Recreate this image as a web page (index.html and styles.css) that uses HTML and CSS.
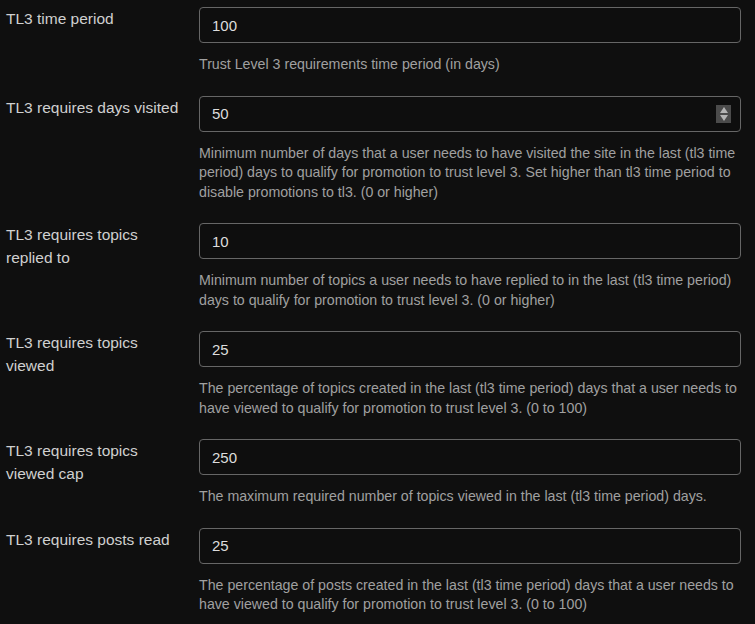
FILE: index.html
```html
<!DOCTYPE html>
<html lang="en">
<head>
    <meta charset="UTF-8">
    <title>Trust Level Settings</title>
    <link rel="stylesheet" href="styles.css">
</head>
<body>

    <div class="settings">
        <div class="setting">
            <div class="setting-label">TL3 time period</div>
            <div class="setting-value">
                <input type="text" class="setting-input" value="100">
                <div class="desc">Trust Level 3 requirements time period (in days)</div>
            </div>
        </div>

        <div class="setting">
            <div class="setting-label">TL3 requires days visited</div>
            <div class="setting-value">
                <div class="input-wrap">
                    <input type="text" class="setting-input" value="50">
                    <span class="spinner">
                        <span class="spin-up"></span>
                        <span class="spin-down"></span>
                    </span>
                </div>
                <div class="desc">Minimum number of days that a user needs to have visited the site in the last (tl3 time period) days to qualify for promotion to trust level 3. Set higher than tl3 time period to disable promotions to tl3. (0 or higher)</div>
            </div>
        </div>

        <div class="setting">
            <div class="setting-label">TL3 requires topics replied to</div>
            <div class="setting-value">
                <input type="text" class="setting-input" value="10">
                <div class="desc">Minimum number of topics a user needs to have replied to in the last (tl3 time period) days to qualify for promotion to trust level 3. (0 or higher)</div>
            </div>
        </div>

        <div class="setting">
            <div class="setting-label">TL3 requires topics viewed</div>
            <div class="setting-value">
                <input type="text" class="setting-input" value="25">
                <div class="desc">The percentage of topics created in the last (tl3 time period) days that a user needs to have viewed to qualify for promotion to trust level 3. (0 to 100)</div>
            </div>
        </div>

        <div class="setting">
            <div class="setting-label">TL3 requires topics viewed cap</div>
            <div class="setting-value">
                <input type="text" class="setting-input" value="250">
                <div class="desc">The maximum required number of topics viewed in the last (tl3 time period) days.</div>
            </div>
        </div>

        <div class="setting">
            <div class="setting-label">TL3 requires posts read</div>
            <div class="setting-value">
                <input type="text" class="setting-input" value="25">
                <div class="desc">The percentage of posts created in the last (tl3 time period) days that a user needs to have viewed to qualify for promotion to trust level 3. (0 to 100)</div>
            </div>
        </div>
    </div>

</body>
</html>
```

FILE: styles.css
```css
body {
    margin: 0;
    padding: 7px 14px 0 6px;
    background-color: #0f0f0f;
    font-family: "Liberation Sans", Arial, sans-serif;
    color: #dddddd;
}
.setting {
    display: flex;
    align-items: flex-start;
    gap: 12px;
    padding-bottom: 21px;
}
.setting-label {
    flex: none;
    width: 181px;
    font-size: 15.5px;
    line-height: 23px;
    color: #d0d0d0;
}
.setting-value {
    flex: 1;
    min-width: 0;
}
.input-wrap {
    position: relative;
}
.setting-input {
    display: block;
    width: 100%;
    height: 36px;
    box-sizing: border-box;
    margin: 0;
    padding: 0 12px;
    border: 1px solid #666666;
    border-radius: 4px;
    background-color: #0e0e0e;
    color: #dddddd;
    font-family: "Liberation Sans", Arial, sans-serif;
    font-size: 15px;
    outline: none;
}
.spinner {
    position: absolute;
    right: 10px;
    top: 9px;
    width: 15px;
    height: 18px;
    background-color: #4b4b4b;
    display: flex;
    flex-direction: column;
    align-items: center;
    justify-content: center;
    gap: 2px;
}
.spin-up {
    width: 0;
    height: 0;
    border-left: 4px solid transparent;
    border-right: 4px solid transparent;
    border-bottom: 6px solid #b4b4b4;
}
.spin-down {
    width: 0;
    height: 0;
    border-left: 4px solid transparent;
    border-right: 4px solid transparent;
    border-top: 6px solid #b4b4b4;
}
.desc {
    margin-top: 12px;
    font-size: 14.2px;
    line-height: 19.5px;
    color: #a0a0a0;
}
```
